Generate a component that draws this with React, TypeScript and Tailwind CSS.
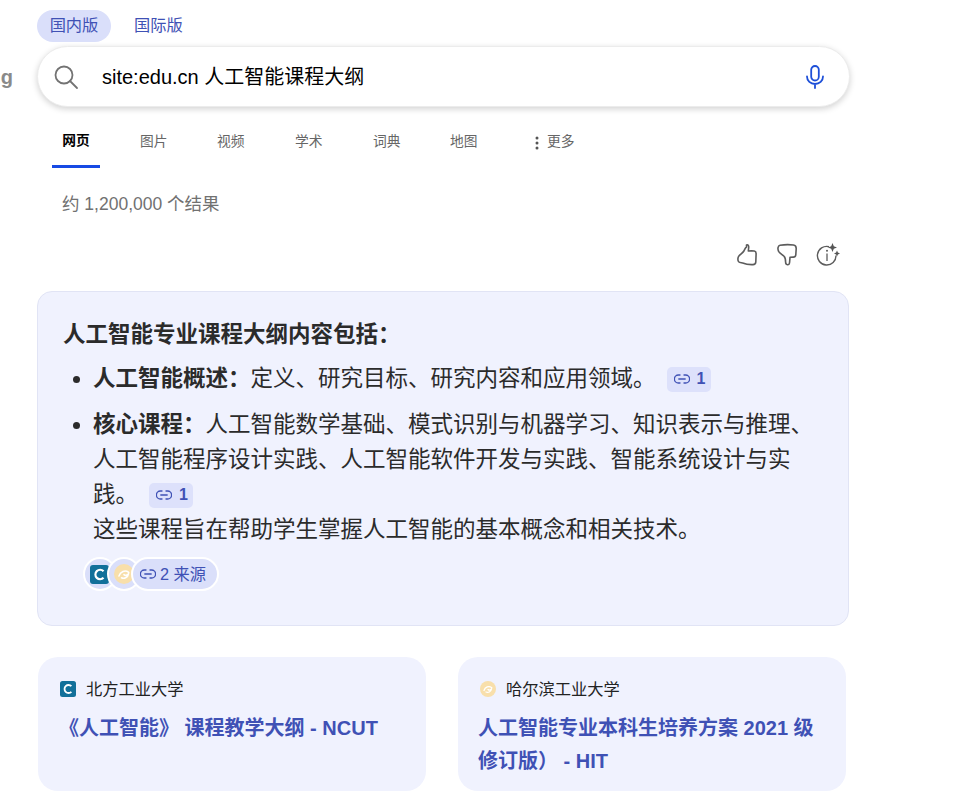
const F = '"Liberation Sans","Noto Sans CJK SC",sans-serif';

function LinkIcon({ className = "" }: { className?: string }) {
  return (
    <svg viewBox="0 0 16 12" className={className} fill="none" stroke="currentColor" strokeWidth="1.3" strokeLinecap="round">
      <path d="M6 2H4.4a3.9 3.9 0 0 0 0 8H6M10 2h1.6a3.9 3.9 0 0 1 0 8H10M4.8 6h6.4" />
    </svg>
  );
}

function Cite() {
  return (
    <span className="inline-flex items-center align-[1px] ml-[11px] w-[44px] h-[25px] rounded-[5px] bg-[#dde1fb] text-[#3f51b5] pl-[7px] gap-[7px]">
      <LinkIcon className="w-[16px] h-[12px]" />
      <span className="text-[16px] font-bold leading-none">1</span>
    </span>
  );
}

function NcutLogo({ size }: { size: number }) {
  return (
    <svg width={size} height={size} viewBox="0 0 16 16">
      <rect width="16" height="16" rx="2.500" fill="#12709a" />
      <path d="M11.400 5.200A4 4 0 1 0 11.400 10.800" fill="none" stroke="#fff" strokeWidth="1.800" />
    </svg>
  );
}

function HitLogo({ size }: { size: number }) {
  return (
    <svg width={size} height={size} viewBox="0 0 16 16">
      <circle cx="8" cy="8" r="8" fill="#f8dfab" />
      <path d="M4 9.500c1-3.500 5-5 7.500-3M6 11c2 1 5 0 5.500-3-1 1-2.500 1.500-3.500.5" fill="none" stroke="#fff" strokeWidth="1.300" strokeLinecap="round" />
    </svg>
  );
}

function ThumbUp() {
  return (
    <svg width="22" height="24" viewBox="0 0 22 24" fill="none" stroke="#5c5c5c" strokeWidth="1.600" strokeLinejoin="round">
      <path d="M10.500 2c1.800-.6 2.300.8 2.200 2.500L12.300 8c2-.2 4.500-.2 6 0 1.500.3 1.900 1.300 1.800 3l-.3 8c-.1 1.800-1 2.600-2.800 2.600-3.500.1-7-.1-9.500-1.300-1.500-.7-3.800-.6-4.800-1.600-1.200-1.300-1-4.300.2-5.700 1.500-1.700 3.800-2.800 5-5 .8-1.300 1.300-3.400 2.600-4z" />
    </svg>
  );
}

function ThumbDown() {
  return (
    <svg width="22" height="24" viewBox="0 0 22 24" fill="none" stroke="#5c5c5c" strokeWidth="1.600" strokeLinejoin="round">
      <path d="M4 2.200C8 1.600 14 1.500 17.500 2c2.200.3 2.800 1.500 2.700 3.800l-.4 6c-.2 1.500-1 2.200-2.500 2.300l-3.300.2-.4 5c-.1 1.700-.8 2.500-2.200 2.400-1.300-.1-1.800-1-1.800-2.600 0-2.300 0-4.400-1.500-5.800-1.500-1.500-4.600-3.300-5.500-5C1.500 6 1.700 2.600 4 2.200z" />
    </svg>
  );
}

function InfoSpark() {
  return (
    <svg width="24" height="24" viewBox="0 0 24 24" fill="none">
      <path d="M13 3.700A9.300 9.300 0 1 0 20 12.500" stroke="#5c5c5c" strokeWidth="1.400" />
      <path d="M11 10.500v7.500" stroke="#5c5c5c" strokeWidth="1.300" />
      <circle cx="11" cy="7.800" r="1" fill="#5c5c5c" />
      <path d="M16.500 0l1.300 3.200L21 4.500l-3.200 1.300L16.500 9l-1.300-3.200L12 4.500l3.200-1.300zM21 7.500l.9 2.100 2.100.9-2.100.9-.9 2.100-.9-2.100-2.100-.9 2.100-.9z" fill="#555" />
    </svg>
  );
}

const tabs = [
  { t: "图片", w: "w-[77px]" },
  { t: "视频", w: "w-[78px]" },
  { t: "学术", w: "w-[78px]" },
  { t: "词典", w: "w-[77px]" },
  { t: "地图", w: "w-[85px]" },
];

export default function App() {
  return (
    <div className="w-[968px] h-[805px] overflow-hidden bg-white" style={{ fontFamily: F }}>
      <div className="pl-[37px] pt-[10px] w-[849px]">
        <div className="flex items-center h-[32px] text-[#3f51b5] text-[16.250px] pb-[1px]">
          <span className="w-[74px] h-[32px] rounded-full bg-[#dadffa] flex items-center justify-center pb-[1px]">国内版</span>
          <span className="ml-[23px] pb-[1px]">国际版</span>
        </div>

        <div className="relative mt-[4px] h-[61px] w-[813px] rounded-full bg-white border border-[#ececec] shadow-[0_2px_6px_rgba(0,0,0,0.18)] flex items-center">
          <span className="absolute right-[calc(100%+25px)] w-[13px] overflow-hidden text-[20px] font-bold text-[#8a8a8a] flex justify-end">ng</span>
          <svg width="26" height="26" viewBox="0 0 26 26" className="ml-[15px] text-[#737373]" fill="none" stroke="currentColor" strokeWidth="1.800" strokeLinecap="round">
            <circle cx="11" cy="11" r="8.500" />
            <path d="M17 17l7 7" />
          </svg>
          <span className="ml-[23px] pt-[1px] text-[20px] text-black leading-none">site:edu.cn 人工智能课程大纲</span>
          <svg width="20" height="24" viewBox="0 0 20 24" className="ml-auto mr-[24px] text-[#1d4fd8]" fill="none" stroke="currentColor" strokeWidth="1.800" strokeLinecap="round">
            <rect x="6.200" y="1" width="7.600" height="14.500" rx="3.800" />
            <path d="M2 11.500c0 4.500 3.500 7.500 8 7.500s8-3 8-7.500M10 19v4" />
          </svg>
        </div>

        <div className="flex h-[61px] text-[13.750px] text-[#666]">
          <div className="w-[103px] pl-[15px]">
            <div className="w-[48px] h-[61px] border-b-[3px] border-[#174ae4] flex items-center justify-center pt-[10px] text-black font-bold">网页</div>
          </div>
          {tabs.map((x) => (
            <div key={x.t} className={`${x.w} h-[61px] flex items-center pt-[10px]`}>{x.t}</div>
          ))}
          <div className="h-[61px] flex items-center pt-[10px] gap-[8px]">
            <svg width="4" height="14" viewBox="0 0 4 14" fill="#555">
              <circle cx="2" cy="2" r="1.500" />
              <circle cx="2" cy="7" r="1.500" />
              <circle cx="2" cy="12" r="1.500" />
            </svg>
            <span>更多</span>
          </div>
        </div>

        <div className="pl-[25px] mt-[25px] text-[17.500px] leading-[22px] text-[#717171]">约 1,200,000 个结果</div>

        <div className="flex justify-end items-center gap-[18px] w-[803px] mt-[27px] h-[26px]">
          <ThumbUp />
          <ThumbDown />
          <InfoSpark />
        </div>

        <div className="mt-[23px] w-[812px] h-[335px] rounded-[15px] border border-[#e1e4f5] bg-[#f0f2fe] pl-[25px] pt-[25px] text-[22.500px] leading-[35px] text-[#2b2b2b]">
          <div className="font-bold h-[40px]">人工智能专业课程大纲内容包括：</div>
          <ul className="list-disc pl-[30px] w-[756px]">
            <li className="h-[45px] leading-[44px]">
              <b>人工智能概述：</b>定义、研究目标、研究内容和应用领域。<Cite />
            </li>
            <li className="leading-[35px] pt-[5px]">
              <b>核心课程：</b>人工智能数学基础、模式识别与机器学习、知识表示与推理、人工智能程序设计实践、人工智能软件开发与实践、智能系统设计与实践。<Cite />
              <br />
              这些课程旨在帮助学生掌握人工智能的基本概念和相关技术。
            </li>
          </ul>
          <div className="flex items-center mt-[10px] ml-[20px]">
            <span className="w-[34px] h-[34px] rounded-full bg-[#dadffa] border-[2px] border-white flex items-center justify-center pr-[1px]">
              <NcutLogo size={19} />
            </span>
            <span className="w-[34px] h-[34px] -ml-[10px] rounded-full bg-[#dadffa] border-[2px] border-white flex items-center justify-center">
              <HitLogo size={20} />
            </span>
            <span className="h-[34px] w-[88px] -ml-[10px] rounded-full bg-[#dadffa] border-[2px] border-white flex items-center pl-[7px] gap-[4px] text-[#3f51b5] text-[16.250px] leading-none">
              <LinkIcon className="w-[16px] h-[12px]" />
              2 来源
            </span>
          </div>
        </div>

        <div className="flex mt-[31px] ml-[1px] gap-[32px]">
          <div className="w-[388px] h-[134px] rounded-[20px] bg-[#f0f2fe] pl-[22px] pt-[21px]">
            <div className="flex items-center gap-[10px] h-[22px] text-[16.250px] text-[#222]">
              <NcutLogo size={16} />
              北方工业大学
            </div>
            <div className="mt-[12px] -ml-[1px] text-[20px] leading-[33px] font-bold text-[#3f51b5]">《人工智能》 课程教学大纲 - NCUT</div>
          </div>
          <div className="w-[388px] h-[134px] rounded-[20px] bg-[#f0f2fe] pl-[22px] pt-[21px] pr-[20px]">
            <div className="flex items-center gap-[10px] h-[22px] text-[16.250px] text-[#222]">
              <HitLogo size={16} />
              哈尔滨工业大学
            </div>
            <div className="mt-[12px] -ml-[2px] text-[20px] leading-[33px] font-bold text-[#3f51b5]">人工智能专业本科生培养方案 2021 级修订版） - HIT</div>
          </div>
        </div>
      </div>
    </div>
  );
}
